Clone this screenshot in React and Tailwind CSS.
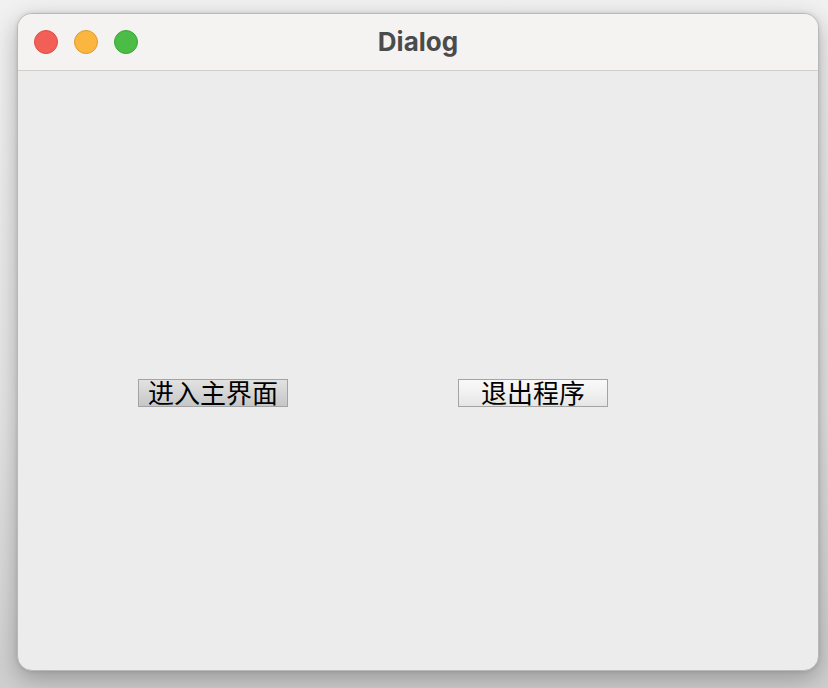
export default function App() {
  return (
    <div
      className="w-[828px] h-[688px] bg-[#e9e9e9] pl-[17px] pt-[13px]"
      style={{ background: "linear-gradient(180deg,#f1f1f1 0%,#e4e4e4 60%,#cfcfcf 100%)" }}
    >
      <div className="w-[802px] h-[658px] rounded-[15px] bg-[#ececec] border border-[#b9b9b9] overflow-hidden flex flex-col shadow-[0_8px_24px_rgba(0,0,0,0.28),0_0_4px_rgba(0,0,0,0.12)]">
        <div className="h-[57px] shrink-0 bg-[#f5f3f2] border-b border-[#cfcfcf] relative flex items-center justify-center">
          <div className="absolute left-[16px] top-[16px] flex gap-[16px]">
            <div className="w-[24px] h-[24px] rounded-full bg-[#f25f57] border border-[#de4c43]" />
            <div className="w-[24px] h-[24px] rounded-full bg-[#fbb63f] border border-[#df9c2c]" />
            <div className="w-[24px] h-[24px] rounded-full bg-[#4bbc45] border border-[#3aa634]" />
          </div>
          <span
            className="text-[26px] font-bold text-[#4b4b4b] leading-none"
            style={{ fontFamily: "Inter, 'Liberation Sans', sans-serif" }}
          >
            Dialog
          </span>
        </div>
        <div className="flex-1 relative">
          <div className="absolute left-[120px] top-[308px] flex gap-[170px]">
            <button
              className="w-[150px] h-[28px] border border-[#a3a3a3] flex items-center justify-center text-black text-[26px] leading-none pb-[3px]"
              style={{
                background: "linear-gradient(180deg,#e2e2e2 0%,#d4d4d4 50%,#c6c6c6 100%)",
                fontFamily: "'Noto Sans CJK SC', sans-serif",
              }}
            >
              进入主界面
            </button>
            <button
              className="w-[150px] h-[28px] border border-[#a3a3a3] flex items-center justify-center text-black text-[26px] leading-none pb-[3px]"
              style={{
                background: "linear-gradient(180deg,#f9f9f9 0%,#f1f1f1 50%,#e5e5e5 100%)",
                fontFamily: "'Noto Sans CJK SC', sans-serif",
              }}
            >
              退出程序
            </button>
          </div>
        </div>
      </div>
    </div>
  );
}
